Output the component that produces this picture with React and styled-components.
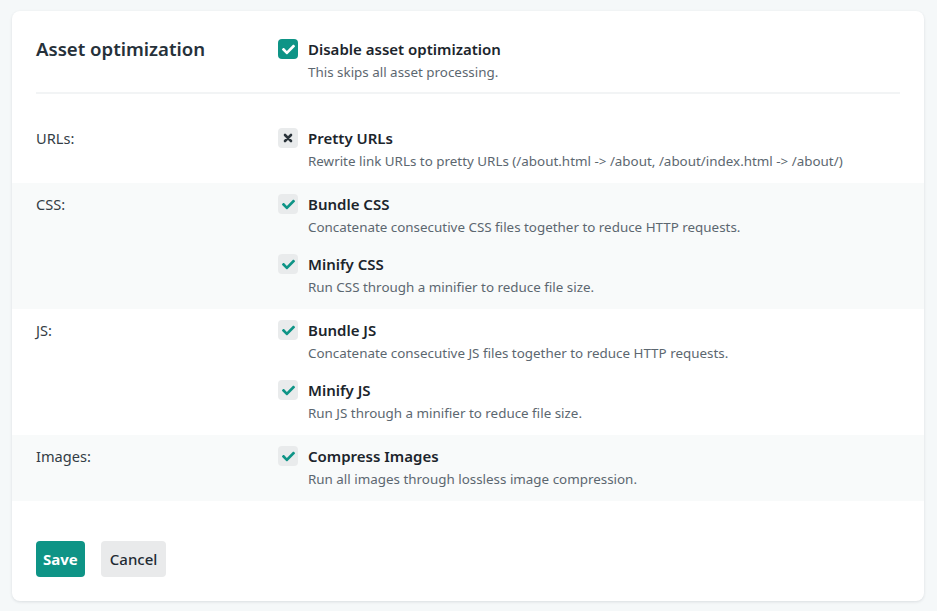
import React from 'react';
import styled, { createGlobalStyle } from 'styled-components';

const GlobalStyle = createGlobalStyle`
    html, body {
        margin: 0;
        background: #f5f8f9;
        font-family: "Noto Sans", "Open Sans", sans-serif;
        color: #1f2a33;
    }
    * { box-sizing: border-box; }
`;

const Card = styled.div`
    margin: 11px 13px 11px 12px;
    background: #fff;
    border-radius: 8px;
    box-shadow: 0 1px 3px rgba(30, 45, 60, 0.12);
    padding: 28px 0 24px;
`;

const Header = styled.div`
    display: grid;
    grid-template-columns: 242px 1fr;
    margin: 0 24px;
    padding-bottom: 11px;
    border-bottom: 2px solid #f2f4f5;
`;

const Title = styled.h2`
    margin: 0;
    font-size: 18.6px;
    font-weight: 600;
    line-height: 20px;
    color: #26313a;
`;

const Sections = styled.div`
    margin-top: 23px;
`;

const Section = styled.div`
    display: grid;
    grid-template-columns: 242px 1fr;
    padding: 11px 24px 13px;
    background: ${p => (p.$shaded ? '#f8fafa' : '#fff')};
`;

const SectionLabel = styled.div`
    font-size: 14.6px;
    line-height: 20px;
    color: #333d45;
`;

const Options = styled.div`
    display: flex;
    flex-direction: column;
    gap: 18px;
`;

const Option = styled.div`
    display: grid;
    grid-template-columns: 20px 1fr;
    column-gap: 10px;
`;

const Box = styled.span`
    width: 20px;
    height: 20px;
    border-radius: 4px;
    display: flex;
    align-items: center;
    justify-content: center;
    background: ${p => (p.$filled ? '#0e9486' : '#e9ebec')};
    color: ${p => (p.$filled ? '#fff' : p.$off ? '#2b343b' : '#0e9486')};
`;

const OptionTitle = styled.div`
    font-size: 15px;
    font-weight: 600;
    line-height: 20px;
    color: #1c252c;
`;

const OptionDesc = styled.div`
    grid-column: 2;
    margin-top: 4px;
    font-size: 13.4px;
    line-height: 18px;
    color: #5c6770;
`;

const Actions = styled.div`
    display: flex;
    gap: 16px;
    margin: 40px 24px 0;
`;

const Button = styled.button`
    height: 36px;
    padding: 0 ${p => (p.$primary ? '7px' : '9px')};
    border: none;
    border-radius: 4px;
    font-family: inherit;
    font-size: 15px;
    font-weight: ${p => (p.$primary ? 700 : 500)};
    background: ${p => (p.$primary ? '#0e9486' : '#e9eaeb')};
    color: ${p => (p.$primary ? '#fff' : '#1f2a33')};
    cursor: pointer;
`;

const Check = () => (
    <svg width="13" height="13" viewBox="0 0 512 512" fill="currentColor">
        <path d="M173.9 439.4 7.5 273c-10-10-10-26.2 0-36.2l36.2-36.2c10-10 26.2-10 36.2 0L192 312.7 432.1 72.6c10-10 26.2-10 36.2 0l36.2 36.2c10 10 10 26.2 0 36.2L210.1 439.4c-10 10-26.2 10-36.2 0z" />
    </svg>
);

const Cross = () => (
    <svg width="10" height="10" viewBox="0 0 10 10" stroke="currentColor" strokeWidth="2.6" strokeLinecap="round">
        <path d="M2 2l6 6M8 2l-6 6" />
    </svg>
);

const sections = [
    {
        label: 'URLs:',
        options: [
            { title: 'Pretty URLs', desc: 'Rewrite link URLs to pretty URLs (/about.html -> /about, /about/index.html -> /about/)', on: false },
        ],
    },
    {
        label: 'CSS:',
        options: [
            { title: 'Bundle CSS', desc: 'Concatenate consecutive CSS files together to reduce HTTP requests.', on: true },
            { title: 'Minify CSS', desc: 'Run CSS through a minifier to reduce file size.', on: true },
        ],
    },
    {
        label: 'JS:',
        options: [
            { title: 'Bundle JS', desc: 'Concatenate consecutive JS files together to reduce HTTP requests.', on: true },
            { title: 'Minify JS', desc: 'Run JS through a minifier to reduce file size.', on: true },
        ],
    },
    {
        label: 'Images:',
        options: [
            { title: 'Compress Images', desc: 'Run all images through lossless image compression.', on: true },
        ],
    },
];

const App = () => (
    <React.Fragment>
        <GlobalStyle />
        <Card>
            <Header>
                <Title>Asset optimization</Title>
                <Option>
                    <Box $filled><Check /></Box>
                    <OptionTitle>Disable asset optimization</OptionTitle>
                    <OptionDesc>This skips all asset processing.</OptionDesc>
                </Option>
            </Header>
            <Sections>
                {sections.map((s, i) => (
                    <Section key={s.label} $shaded={i % 2 === 1}>
                        <SectionLabel>{s.label}</SectionLabel>
                        <Options>
                            {s.options.map(o => (
                                <Option key={o.title}>
                                    <Box $off={!o.on}>{o.on ? <Check /> : <Cross />}</Box>
                                    <OptionTitle>{o.title}</OptionTitle>
                                    <OptionDesc>{o.desc}</OptionDesc>
                                </Option>
                            ))}
                        </Options>
                    </Section>
                ))}
            </Sections>
            <Actions>
                <Button $primary>Save</Button>
                <Button>Cancel</Button>
            </Actions>
        </Card>
    </React.Fragment>
);

export default App;
